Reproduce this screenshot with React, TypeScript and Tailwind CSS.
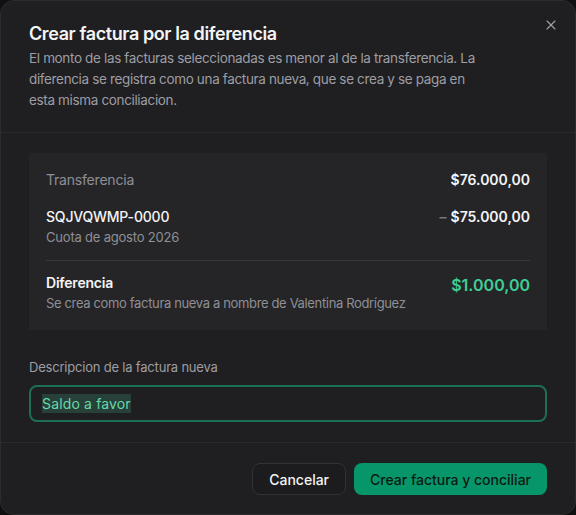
import { X } from "lucide-react";

export default function App() {
  return (
    <div
      className="w-[576px] h-[515px] bg-[#101011] overflow-hidden"
      style={{ fontFamily: "Inter, 'Liberation Sans', sans-serif" }}
    >
      <div className="relative h-full flex flex-col bg-[#1f1f21] border border-[#2c2c2f] rounded-[14px]">
        <button className="absolute right-[16px] top-[16px] text-[#a1a1a6]">
          <X size={16} strokeWidth={1.6} />
        </button>

        {/* header */}
        <div className="px-[28px] pt-[20px] pb-[21px] border-b border-[#2a2a2d]">
          <h2 className="text-[18px] font-semibold text-[#f4f4f5] leading-[26px] tracking-[-0.4px]">
            Crear factura por la diferencia
          </h2>
          <p className="mt-[1px] w-[452px] text-[13.5px] leading-[21px] text-[#9d9da3] tracking-[-0.35px]">
            El monto de las facturas seleccionadas es menor al de la transferencia. La diferencia se
            registra como una factura nueva, que se crea y se paga en esta misma conciliacion.
          </p>
        </div>

        {/* body */}
        <div className="px-[28px] pt-[20px] pb-[20px] border-b border-[#2a2a2d]">
          <div className="bg-[#252528] px-[17px] pt-[16px] pb-[17px]">
            <div className="flex justify-between items-center h-[20px]">
              <span className="text-[14px] text-[#8f8f95] tracking-[-0.2px]">Transferencia</span>
              <span className="text-[14px] font-semibold text-[#f4f4f5]">$76.000,00</span>
            </div>
            <div className="mt-[18px] flex justify-between items-start">
              <div>
                <div className="text-[14px] font-medium text-[#f4f4f5] leading-[20px] tracking-[-0.2px]">
                  SQJVQWMP-0000
                </div>
                <div className="text-[13px] text-[#8f8f95] leading-[20px] tracking-[-0.2px]">
                  Cuota de agosto 2026
                </div>
              </div>
              <div className="text-[14px] font-semibold text-[#f4f4f5] leading-[20px]">
                <span className="text-[#77777c] mr-[4px]">–</span>$75.000,00
              </div>
            </div>
            <div className="mt-[13px] border-t border-[#38383c]" />
            <div className="mt-[12px] flex justify-between items-start">
              <div>
                <div className="text-[14px] font-semibold text-[#f4f4f5] leading-[20px] tracking-[-0.2px]">
                  Diferencia
                </div>
                <div className="text-[13px] text-[#8f8f95] leading-[20px] tracking-[-0.35px]">
                  Se crea como factura nueva a nombre de Valentina Rodríguez
                </div>
              </div>
              <div className="mt-[1px] text-[16px] font-semibold text-[#3fcf94] leading-[22px]">$1.000,00</div>
            </div>
          </div>

          <label className="block mt-[28px] text-[13px] text-[#9d9da3] leading-[18px] tracking-[-0.2px]">
            Descripcion de la factura nueva
          </label>
          <div className="mt-[9px] h-[37px] rounded-[8px] border-2 border-[#1d6f53] flex items-center px-[11px]">
            <span className="text-[14px] text-[#66d9a6] bg-[#28403a] leading-[19px] tracking-[0.15px]">
              Saldo a favor
            </span>
          </div>
        </div>

        {/* footer */}
        <div className="flex justify-end gap-[8px] px-[28px] pt-[20px]">
          <button className="h-[32px] px-[16px] rounded-[8px] border border-[#333336] bg-[#1c1c1e] text-[14px] font-medium text-[#f4f4f5]">
            Cancelar
          </button>
          <button className="h-[32px] px-[16px] rounded-[8px] bg-[#079669] text-[14px] font-medium text-[#0b1a14]">
            Crear factura y conciliar
          </button>
        </div>
      </div>
    </div>
  );
}
